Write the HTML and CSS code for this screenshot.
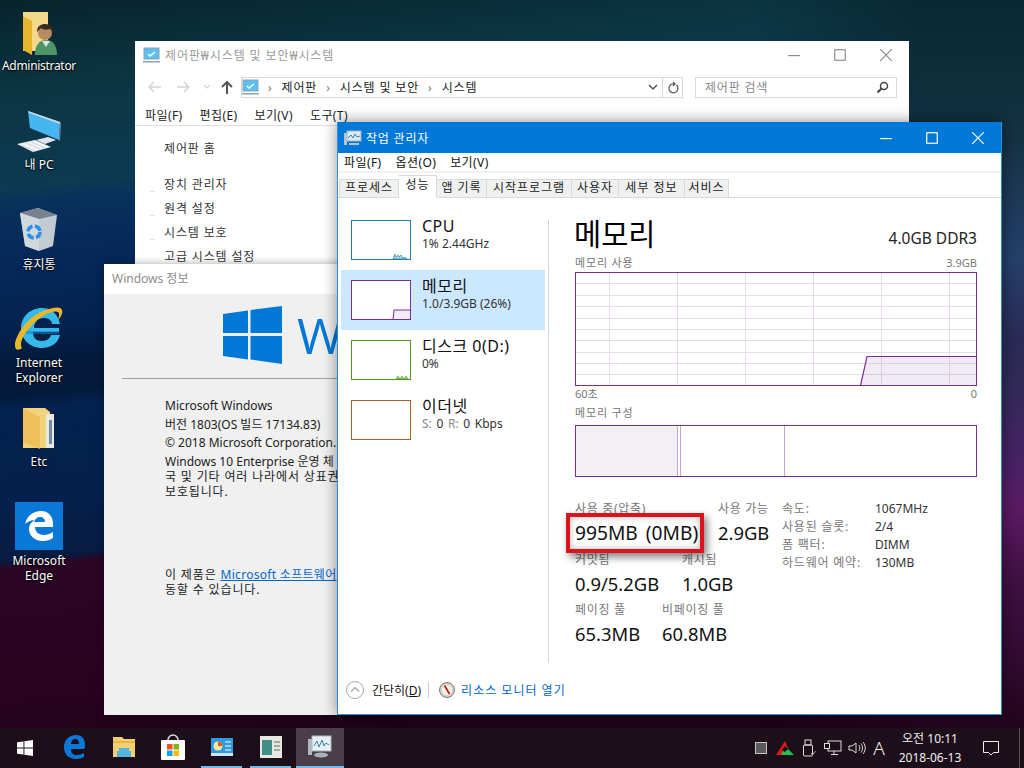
FILE: index.html
```html
<!DOCTYPE html>
<html lang="ko">
<head>
<meta charset="utf-8">
<title>작업 관리자</title>
<link rel="stylesheet" href="styles.css">
</head>
<body>
<div class="desktop">

  <div class="dicon di-admin">
    <svg width="52" height="46" viewBox="0 0 52 46"><path d="M10 1h25v39H10z" fill="#f3d98a"/><path d="M10 5l9 5v34l-9-5z" fill="#e8b62e"/><path d="M22 44c0-11 5-15 11-15s11 4 11 15z" fill="#4d9468"/><path d="M29 30l4 6 4-6z" fill="#d9e6dc"/><circle cx="32" cy="22" r="7" fill="#b98a60"/><path d="M24 21c0-6 4-8 8-8 5 0 8 3 8 8l-3-3c-3 1-7 1-9-1z" fill="#3a2a20"/></svg>
    <span>Administrator</span>
  </div>
  <div class="dicon di-pc">
    <svg width="52" height="46" viewBox="0 0 52 46"><path d="M15 2l32 11-1 18-29-12z" fill="#45b6f2"/><path d="M15 2l32 11v2L16 4z" fill="#c8d6e0"/><path d="M47 13l1 1-1 18-1-1z" fill="#7d8a96"/><path d="M23 31l12-3 8 3-11 4z" fill="#dfe4ea"/><path d="M4 35l18-4 16 7-18 5z" fill="#f2f3f5"/><path d="M8 36l14 6M13 34l14 6M18 33l14 6" stroke="#b8bec4" stroke-width=".6"/></svg>
    <span>내 PC</span>
  </div>
  <div class="dicon di-bin">
    <svg width="52" height="46" viewBox="0 0 52 46"><path d="M7 6l18-5 19 7-4 31-14 5-14-5z" fill="#c2cad2"/><path d="M7 6l18-5 19 7-18 4z" fill="#77838e"/><path d="M26 12v32l-14-5-5-33z" fill="#d8dee3" opacity=".7"/><circle cx="21" cy="25" r="6" fill="none" stroke="#2a8fe6" stroke-width="3.500" stroke-dasharray="7 2.500"/></svg>
    <span>휴지통</span>
  </div>
  <div class="dicon di-ie">
    <svg width="52" height="48" viewBox="0 0 52 48"><path d="M46 24H21c0-6 4-10 10-10 5 0 8 3 8 6h8C45 10 38 4 29 4 17 4 8 13 8 24s9 20 21 20c9 0 16-5 18-13h-9c-1 3-4 6-9 6-6 0-9-3-9-9h26z" fill="#35b9ea"/><path d="M13 27h33v3H13z" fill="#0a7fc4" opacity=".55"/><path d="M3 45C-2 38 12 14 30 7c10-4 18-5 19-1 1 3-1 7-4 10 1-3 2-7 0-8-3-2-13 1-23 10C13 26 5 39 9 44c-2 2-5 2-6 1z" fill="#e8b82c"/></svg>
    <span>Internet<br>Explorer</span>
  </div>
  <div class="dicon di-etc">
    <svg width="52" height="46" viewBox="0 0 52 46"><path d="M10 2h22l5 4v36H10z" fill="#f2d27c"/><path d="M33 8h8v34h-8z" fill="#e9e9e2"/><path d="M10 2l17 9v32L10 36z" fill="#eec05a"/><path d="M36 14h3v24h-3z" fill="#6f8fa0"/></svg>
    <span>Etc</span>
  </div>
  <div class="dicon di-edge">
    <div class="edge-tile"><svg width="30" height="31" viewBox="0 0 30 31"><path d="M1 13C3 5 9 0 17 0c8 0 12 6 12 13v3H11c0 5 4 8 9 8 3 0 6-1 9-3v6c-3 2-6 3-10 3C10 30 5 24 5 18c0-4 2-7 6-9-4 0-8 2-10 4zM21 11c0-3-2-5-5-5s-5 2-6 5z" fill="#fff"/></svg></div>
    <span>Microsoft<br>Edge</span>
  </div>

  <section class="win explorer">
    <header class="ex-title">
      <svg class="pc-mini" width="17" height="16" viewBox="0 0 17 16"><rect x="1" y="1" width="15" height="11" fill="#5cc0f2" stroke="#8ea2b0"/><path d="M5 7l2 2 5-4" stroke="#fff" fill="none" stroke-width="1.500"/><rect y="14" width="17" height="1.500" fill="#8ea2b0"/></svg>
      <span class="ex-title-text">제어판₩시스템 및 보안₩시스템</span>
      <div class="caption grey">
        <svg width="46" height="14" viewBox="0 0 12 12"><path d="M1 6.500h10" stroke="currentColor"/></svg>
        <svg width="46" height="14" viewBox="0 0 12 12"><rect x="1.500" y="1.500" width="9" height="9" fill="none" stroke="currentColor"/></svg>
        <svg width="46" height="14" viewBox="0 0 12 12"><path d="M1 1l10 10M11 1L1 11" stroke="currentColor" fill="none"/></svg>
      </div>
    </header>
    <div class="ex-nav">
      <span class="nv"><svg width="13" height="12" viewBox="0 0 13 12"><path d="M6 1L1 6l5 5M1 6h12" fill="none" stroke="#d4d4d4" stroke-width="1.500"/></svg></span>
      <span class="nv"><svg width="13" height="12" viewBox="0 0 13 12"><path d="M7 1l5 5-5 5M12 6H0" fill="none" stroke="#d4d4d4" stroke-width="1.500"/></svg></span>
      <span class="nv small"><svg width="8" height="6" viewBox="0 0 8 6"><path d="M1 1l3 3 3-3" fill="none" stroke="#d4d4d4" stroke-width="1.200"/></svg></span>
      <span class="nv up"><svg width="12" height="13" viewBox="0 0 12 13"><path d="M1 6l5-5 5 5M6 1v12" fill="none" stroke="#555" stroke-width="2"/></svg></span>
      <div class="addr">
        <svg class="pc-mini" width="17" height="16" viewBox="0 0 17 16"><rect x="1" y="1" width="15" height="11" fill="#5cc0f2" stroke="#8ea2b0"/><path d="M5 7l2 2 5-4" stroke="#fff" fill="none" stroke-width="1.500"/><rect y="14" width="17" height="1.500" fill="#8ea2b0"/></svg>
        <span class="crumb-sep">›</span><span>제어판</span><span class="crumb-sep">›</span><span>시스템 및 보안</span><span class="crumb-sep">›</span><span>시스템</span>
        <span class="addr-end">
          <svg width="10" height="8" viewBox="0 0 10 8"><path d="M1 2l4 4 4-4" fill="none" stroke="#555" stroke-width="1.500"/></svg>
          <svg class="refresh" width="12" height="13" viewBox="0 0 12 13"><path d="M9.500 4A4.500 4.500 0 1 1 5 3H8M6 1l2 2-2 2" fill="none" stroke="#555" stroke-width="1.200"/></svg>
        </span>
      </div>
      <div class="search"><span>제어판 검색</span><svg width="13" height="13" viewBox="0 0 13 13"><circle cx="8" cy="5" r="3.500" fill="none" stroke="#444" stroke-width="1.500"/><path d="M5.500 7.500L1.500 11.500" stroke="#444" stroke-width="2"/></svg></div>
    </div>
    <nav class="ex-menu"><span>파일(F)</span><span>편집(E)</span><span>보기(V)</span><span>도구(T)</span></nav>
    <ul class="ex-side">
      <li class="home">제어판 홈</li>
      <li class="mk">장치 관리자</li>
      <li class="mk">원격 설정</li>
      <li class="mk">시스템 보호</li>
      <li>고급 시스템 설정</li>
    </ul>
  </section>

  <section class="win about">
    <header class="ab-title">Windows 정보</header>
    <div class="ab-brand">
      <svg width="59" height="58" viewBox="0 0 59 58"><path d="M0 8l25-3.500V27H0zM27.500 4L59 0v27H27.500zM0 30h25v23.500L0 50zM27.500 30H59v28l-31.500-4.500z" fill="#0078d7"/></svg>
      <span class="ab-w">W</span>
    </div>
    <hr class="ab-rule">
    <div class="ab-text">
      <p>Microsoft Windows</p>
      <p>버전 1803(OS 빌드 17134.83)</p>
      <p>© 2018 Microsoft Corporation.</p>
      <p class="ab-para">Windows 10 Enterprise 운영 체<br><span class="ko">국 및 기타 여러 나라에서 상표권</span><br><span class="ko">보호됩니다.</span></p>
      <p class="ab-lic"><span class="ko">이 제품은 </span><a>Microsoft 소프트웨어</a><br><span class="ko">동할 수 있습니다.</span></p>
    </div>
  </section>

  <section class="win tm">
    <header class="tm-title">
      <svg width="18" height="16" viewBox="0 0 18 16"><rect x="3" y="1" width="14" height="10" fill="#dcebf5" stroke="#9fb2c0"/><path d="M4 8l3-3 2 3 2-4 2 3 3-1" fill="none" stroke="#3a7fb0"/><rect x="0" y="3" width="3" height="12" fill="#b8c4cc"/><rect x="5" y="13" width="10" height="2" fill="#b8c4cc"/></svg>
      <span>작업 관리자</span>
      <div class="caption white">
        <svg width="46" height="14" viewBox="0 0 12 12"><path d="M1 6.500h10" stroke="currentColor"/></svg>
        <svg width="46" height="14" viewBox="0 0 12 12"><rect x="1.500" y="1.500" width="9" height="9" fill="none" stroke="currentColor"/></svg>
        <svg width="46" height="14" viewBox="0 0 12 12"><path d="M1 1l10 10M11 1L1 11" stroke="currentColor" fill="none"/></svg>
      </div>
    </header>
    <nav class="tm-menu"><span>파일(F)</span><span>옵션(O)</span><span>보기(V)</span></nav>
    <div class="tabs">
      <span class="tab t1">프로세스</span><span class="tab t2 on">성능</span><span class="tab t3">앱 기록</span><span class="tab t4">시작프로그램</span><span class="tab t5">사용자</span><span class="tab t6">세부 정보</span><span class="tab t7">서비스</span>
    </div>
    <div class="tm-body">
      <aside class="side">
        <div class="item">
          <svg class="thumb" width="60" height="40" viewBox="0 0 60 40"><path d="M42 39l2-5 1 3 2-2 1 2 2-2 2 3 2-1 2 2z" fill="#a9d0e4" stroke="#1f7aa6" stroke-width=".6"/><rect x=".5" y=".5" width="59" height="39" fill="none" stroke="#1f7aa6"/></svg>
          <div class="meta"><div class="m-name">CPU</div><div class="m-val">1% 2.44GHz</div></div>
        </div>
        <div class="item sel">
          <svg class="thumb" width="60" height="40" viewBox="0 0 60 40"><rect width="60" height="40" fill="#fff"/><path d="M42 40l1-10h17v10z" fill="#f1edf3" stroke="#7a2d98"/><rect x=".5" y=".5" width="59" height="39" fill="none" stroke="#7a2d98"/></svg>
          <div class="meta"><div class="m-name">메모리</div><div class="m-val">1.0/3.9GB (26%)</div></div>
        </div>
        <div class="item">
          <svg class="thumb" width="60" height="40" viewBox="0 0 60 40"><path d="M45 39l2-3 2 3 2-3 2 3 2-3 2 3z" fill="#a6cf80" stroke="#4f9a1e" stroke-width=".6"/><rect x=".5" y=".5" width="59" height="39" fill="none" stroke="#4f9a1e"/></svg>
          <div class="meta"><div class="m-name">디스크 0(D:)</div><div class="m-val">0%</div></div>
        </div>
        <div class="item">
          <svg class="thumb" width="60" height="40" viewBox="0 0 60 40"><rect x=".5" y=".5" width="59" height="39" fill="none" stroke="#a7622a"/></svg>
          <div class="meta"><div class="m-name">이더넷</div><div class="m-val net"><i>S:</i> 0 <i>R:</i> 0 Kbps</div></div>
        </div>
      </aside>
      <main class="panel">
        <div class="p-head"><h1>메모리</h1><span class="p-spec">4.0GB DDR3</span></div>
        <div class="cap-row"><span class="ko">메모리 사용</span><span>3.9GB</span></div>
        <svg class="graph" width="402" height="114" viewBox="0 0 402 114">
          <g stroke="#e6dcea" fill="none">
            <path d="M34.500 0v114M102.500 0v114M170.500 0v114M238.500 0v114M306.500 0v114M374.500 0v114"/>
            <path d="M0 11.500h402M0 23.500h402M0 34.500h402M0 46.500h402M0 57.500h402M0 68.500h402M0 80.500h402M0 91.500h402M0 102.500h402"/>
          </g>
          <path d="M285.500 113.500L292 84.500H401.500V113.500z" fill="#8a5a9a" fill-opacity=".12" stroke="none"/>
          <path d="M285.500 113.500L292 84.500H401.500" fill="none" stroke="#7a2d98" stroke-width="1.200"/>
          <rect x=".5" y=".5" width="401" height="113" fill="none" stroke="#7a2d98"/>
        </svg>
        <div class="cap-row axis"><span>60초</span><span>0</span></div>
        <div class="cap-row comp-cap"><span class="ko">메모리 구성</span></div>
        <svg class="graph" width="402" height="52" viewBox="0 0 402 52">
          <rect x="0" y="0" width="103" height="52" fill="#f3f0f5"/>
          <path d="M102.500 0v52M105.500 0v52M209.500 0v52" stroke="#c3a4d2" fill="none"/>
          <rect x=".5" y=".5" width="401" height="51" fill="none" stroke="#7a2d98"/>
        </svg>
        <div class="stats">
          <div class="stats-left">
            <div class="srow r1">
              <div class="st w143"><label>사용 중(압축)</label><b>995MB (0MB)</b></div>
              <div class="st"><label>사용 가능</label><b>2.9GB</b></div>
            </div>
            <div class="srow r2">
              <div class="st w107"><label>커밋됨</label><b>0.9/5.2GB</b></div>
              <div class="st"><label>캐시됨</label><b>1.0GB</b></div>
            </div>
            <div class="srow r3">
              <div class="st w87"><label>페이징 풀</label><b>65.3MB</b></div>
              <div class="st"><label>비페이징 풀</label><b>60.8MB</b></div>
            </div>
          </div>
          <dl class="spec">
            <dt>속도:</dt><dd>1067MHz</dd>
            <dt>사용된 슬롯:</dt><dd>2/4</dd>
            <dt>폼 팩터:</dt><dd>DIMM</dd>
            <dt>하드웨어 예약:</dt><dd>130MB</dd>
          </dl>
        </div>
        <div class="red-box"></div>
      </main>
    </div>
    <footer class="tm-foot">
      <svg width="18" height="18" viewBox="0 0 18 18"><circle cx="9" cy="9" r="8.500" fill="#fff" stroke="#a8a8a8"/><path d="M5 10.500L9 6.500l4 4" fill="none" stroke="#a0a0a0" stroke-width="1.200"/></svg>
      <span class="less">간단히(<u>D</u>)</span>
      <span class="foot-sep"></span>
      <svg width="16" height="16" viewBox="0 0 16 16"><circle cx="8" cy="8" r="7.500" fill="#d8d2c8" stroke="#7a7a70"/><circle cx="8" cy="8" r="5" fill="#f4f0e6"/><path d="M5.500 3.500L10.500 12" stroke="#c01818" stroke-width="1.600"/></svg>
      <a class="rmon">리소스 모니터 열기</a>
    </footer>
  </section>

  <footer class="taskbar">
    <div class="tb-start"><svg width="16" height="16" viewBox="0 0 16 16"><path d="M0 2.300l6.500-.9v6.100H0zM7.400 1.300L16 0v7.500H7.400zM0 8.500h6.500v6.100L0 13.700zM7.400 8.500H16V16l-8.600-1.300z" fill="#fff"/></svg></div>
    <div class="tb-app"><svg width="21" height="24" viewBox="0 0 21 24"><path d="M20 14H7c0 4 2 6 6 6 3 0 5-1 7-2v4c-2 1-5 2-8 2C4 24 0 19 0 12 0 5 5 0 12 0c6 0 9 4 9 10 0 2 0 3-1 4zM15 9c0-3-1-5-4-5-2 0-4 2-4 5z" fill="#0a78d7"/></svg></div>
    <div class="tb-app"><svg width="22" height="20" viewBox="0 0 22 20"><path d="M0 0h9l2 2h11v18H0z" fill="#f2cf72"/><path d="M0 4h22v2H0z" fill="#e8b848"/><path d="M6 11h10v3h2v6H4v-6h2z" fill="#53b4e0"/></svg></div>
    <div class="tb-app"><svg width="24" height="26" viewBox="0 0 24 26"><path d="M7 6a5 5 0 0 1 10 0" fill="none" stroke="#ddd" stroke-width="1.500"/><rect y="6" width="24" height="20" rx="1" fill="#fff"/><rect x="6" y="10" width="5.500" height="5.500" fill="#f25022"/><rect x="12.500" y="10" width="5.500" height="5.500" fill="#7fba00"/><rect x="6" y="16.500" width="5.500" height="5.500" fill="#00a4ef"/><rect x="12.500" y="16.500" width="5.500" height="5.500" fill="#ffb900"/></svg></div>
    <div class="tb-app run"><svg width="22" height="18" viewBox="0 0 22 18"><rect width="22" height="18" fill="#2f9ae0"/><circle cx="7" cy="8" r="4.500" fill="#f5e6a0"/><path d="M7 8V3.500A4.500 4.500 0 0 1 11.500 8z" fill="#e05a20"/><path d="M14 4h6M14 8h6M14 12h6" stroke="#fff"/><rect x="0" y="15" width="22" height="3" fill="#cce3f2"/></svg></div>
    <div class="tb-app run"><svg width="22" height="22" viewBox="0 0 22 22"><rect width="22" height="22" fill="#e8e8e2"/><rect x="2" y="4" width="10" height="15" fill="#3f8f88"/><path d="M14 6h6M14 10h6M14 14h6" stroke="#666"/></svg></div>
    <div class="tb-app run active"><svg width="24" height="24" viewBox="0 0 24 24"><rect x="4" y="1" width="19" height="15" fill="#e8f0f4" stroke="#a8b6c0"/><path d="M6 11l3-5 2 6 3-7 2 6 2-3 3 2" fill="none" stroke="#3a7fb0"/><rect y="4" width="4" height="16" fill="#b0b8be"/><ellipse cx="13" cy="20" rx="7" ry="2.500" fill="#aab2b8"/></svg></div>
    <div class="tray">
      <span class="ti"><svg width="12" height="12" viewBox="0 0 12 12"><rect x=".5" y=".5" width="11" height="11" fill="#5a5a5a" stroke="#c4c4c4"/></svg></span>
      <span class="ti"><svg width="18" height="14" viewBox="0 0 18 14"><path d="M9 0l3 7-6 7H0z" fill="#e01818"/><path d="M9 5l9 9H5z" fill="#20c050"/><path d="M9 5l-3 4 3 2 3-3z" fill="#111"/></svg></span>
      <span class="ti"><svg width="14" height="18" viewBox="0 0 14 18"><rect x="3" y="1" width="6" height="5" fill="none" stroke="#ddd"/><rect x="1.500" y="6" width="9" height="11" rx="1" fill="none" stroke="#ddd"/><path d="M9 14l1.500 2 3-4" fill="none" stroke="#aaa"/></svg></span>
      <span class="ti"><svg width="18" height="16" viewBox="0 0 18 16"><rect x="4" y="1" width="13" height="10" fill="none" stroke="#ddd"/><rect x=".5" y="3.500" width="5" height="5" fill="#1c0e18" stroke="#ddd"/><path d="M10 11v3M7 14.500h7" stroke="#ddd"/></svg></span>
      <span class="ti"><svg width="18" height="14" viewBox="0 0 18 14"><path d="M1 5h3l4-3v10L4 9H1z" fill="none" stroke="#ddd"/><path d="M11 4c1 2 1 4 0 6M13 2.500c2 3 2 6 0 9M15 1c3 4 3 8 0 12" fill="none" stroke="#ddd"/></svg></span>
      <span class="ti ime">A</span>
    </div>
    <div class="clock"><span>오전 10:11</span><span>2018-06-13</span></div>
    <div class="notif"><svg width="16" height="15" viewBox="0 0 16 15"><path d="M.5.500h15v11h-5L8 14l-2.500-2.500h-5z" fill="none" stroke="#eee"/></svg></div>
    <div class="show-desk"></div>
  </footer>
</div>
</body>
</html>
```
FILE: styles.css
```css
* { box-sizing: border-box; }
html, body { margin: 0; padding: 0; }
body { font-family: "Noto Sans", "Noto Sans CJK KR", sans-serif; font-size: 12px; color: #222; }
ul, p, dl, dd, h1 { margin: 0; padding: 0; }
.ko { letter-spacing: .85px; }
.desktop {
  position: relative; width: 1024px; height: 768px; overflow: hidden;
  background: linear-gradient(174deg, #08232e 0, #0c3644 100px, #0b3a52 190px, #08315c 205px, #06285a 260px, #04224f 330px, #031a3a 365px, #031a3a 395px, #04214f 410px, #05204c 500px, #071c42 558px, #2a0525 566px, #28031f 700px, #1e0316 768px);
}
.desktop::before {
  content: ""; position: absolute; right: 0; top: 0; width: 260px; height: 768px;
  background: linear-gradient(180deg, #0a2833 0, #12303f 120px, #25406a 260px, #2a2a55 338px, #332a58 392px, #4a2068 470px, #5a1a60 509px, #3d0f40 587px, #300a30 665px, #26051f 715px, #1e0316 768px);
  -webkit-mask-image: linear-gradient(90deg, transparent, #000 60%);
  mask-image: linear-gradient(90deg, transparent, #000 60%);
}

/* desktop icons */
.dicon { position: absolute; left: 0; width: 78px; display: flex; flex-direction: column; align-items: center; color: #fff; font-size: 12px; line-height: 15px; text-align: center; text-shadow: 0 1px 2px #000, 0 0 2px #000; }
.di-admin { top: 11px; letter-spacing: -.3px; } .di-admin span { margin-top: 1px; }
.di-pc { top: 109px; } .di-pc span { margin-top: 2px; }
.di-bin { top: 207px; } .di-bin span { margin-top: 4px; }
.di-ie { top: 304px; } .di-ie span { margin-top: 3px; }
.di-etc { top: 406px; } .di-etc span { margin-top: 2px; }
.di-edge { top: 502px; } .di-edge span { margin-top: 3px; }
.edge-tile { width: 48px; height: 48px; background: #0a78d7; display: flex; align-items: center; justify-content: center; }

/* windows */
.win { position: absolute; overflow: hidden; }
.caption { display: flex; margin-left: auto; }
.caption.grey { color: #8a8a8a; }
.caption.white { color: #fff; margin-right: 1px; }
.pc-mini { flex: none; }

/* explorer */
.explorer { left: 135px; top: 41px; width: 774px; height: 240px; background: #fff; color: #333; }
.ex-title { height: 30px; display: flex; align-items: center; padding: 0 0 2px 8px; gap: 5px; }
.ex-title-text { color: #9a9a9a; font-size: 12px; letter-spacing: .9px; }
.ex-nav { height: 32px; display: flex; align-items: center; padding: 0 12px 0 5px; }
.nv { width: 29px; display: flex; justify-content: center; align-items: center; }
.nv.small { width: 18px; }
.nv.up { width: 22px; }
.addr { margin-left: 3px; flex: none; width: 442px; height: 21px; border: 1px solid #d9d9d9; display: flex; align-items: center; gap: 9px; padding: 0; color: #222; font-size: 12px; letter-spacing: .85px; }
.crumb-sep { color: #777; font-size: 12px; }
.addr-end { margin-left: auto; display: flex; align-items: center; height: 19px; gap: 4px; padding-right: 3px; }
.refresh { border-left: 1px solid #d9d9d9; box-sizing: content-box; padding: 3px 0 3px 4px; }
.search { margin-left: 12px; flex: none; width: 202px; height: 21px; border: 1px solid #d9d9d9; display: flex; align-items: center; justify-content: space-between; padding: 0 7px 0 9px; color: #888; font-size: 12px; letter-spacing: .8px; }
.ex-menu { height: 21px; display: flex; gap: 17px; align-items: center; padding: 0 0 0 10px; border-bottom: 1px solid #e0e0e0; font-size: 12px; color: #222; margin-top: 2px; letter-spacing: .4px; }
.ex-side { list-style: none; padding: 11px 0 0 29px; color: #333; font-size: 12px; letter-spacing: .85px; }
.ex-side li { height: 24px; line-height: 24px; position: relative; }
.ex-side .home { height: 36px; }
.ex-side .mk::before { content: ""; position: absolute; left: -14px; top: 18px; width: 5px; height: 1px; background: #e2e2e2; }

/* about */
.about { left: 104px; top: 264px; width: 300px; height: 451px; background: #f0f0f0; box-shadow: 0 0 8px rgba(0,0,0,.35); color: #222; }
.ab-title { height: 30px; background: #fff; color: #8c8c8c; padding: 6px 8px; font-size: 12px; line-height: 17px; }
.ab-brand { display: flex; align-items: center; padding: 12px 0 0 119px; gap: 15px; height: 70px; }
.ab-w { color: #0078d7; font-size: 50px; font-weight: 400; line-height: 58px; font-family: "Open Sans", sans-serif; }
.ab-rule { margin: 14px 0 0 18px; border: 0; border-top: 1px solid #a0a0a0; height: 0; }
.ab-text { padding: 18px 0 0 61px; font-size: 12px; line-height: 18.500px; white-space: nowrap; }
.ab-para { line-height: 15px; margin-top: 1px; }
.ab-lic { margin-top: 68px; line-height: 15px; }
.ab-lic a { color: #0066cc; text-decoration: underline; letter-spacing: .3px; }

/* task manager */
.tm { left: 337px; top: 122px; width: 665px; height: 593px; background: #fff; border: 1px solid #2f8fd4; border-top: 0; box-shadow: 0 0 14px rgba(0,0,0,.45); display: flex; flex-direction: column; }
.tm-title { height: 31px; flex: none; background: #0078d7; color: #fff; display: flex; align-items: center; padding: 0 0 0 7px; gap: 4px; font-size: 12px; margin: 0 -1px; letter-spacing: .8px; }
.tm-menu { height: 20px; flex: none; display: flex; align-items: center; gap: 14px; padding: 0 0 0 6px; color: #111; font-size: 12px; letter-spacing: .4px; border-bottom: 2px solid #f2f2f2; }
.tabs { height: 25px; flex: none; display: flex; align-items: flex-end; padding-left: 1px; border-bottom: 1px solid #d9d9d9; background: #fff; position: relative; }
.tab { height: 19px; margin-bottom: -1px; background: #f0f0f0; border: 1px solid #d9d9d9; border-left: 0; font-size: 12px; line-height: 16px; text-align: center; color: #222; letter-spacing: 1px; }
.t1 { width: 60px; border-left: 1px solid #d9d9d9; }
.t2 { width: 38px; } .t3 { width: 50px; } .t4 { width: 85px; } .t5 { width: 47px; } .t6 { width: 66px; } .t7 { width: 44px; }
.tab.on { background: #fff; height: 23px; border-bottom-color: #fff; line-height: 18px; }
.tm-body { flex: 1; display: flex; min-height: 0; }
.side { width: 211px; flex: none; margin-top: 22px; padding-top: 0; height: 443px; border-right: 1px solid #d6d6d6; }
.item { width: 204px; height: 60px; margin-left: 3px; display: flex; padding: 0 0 0 10px; gap: 11px; align-items: flex-start; }
.item .thumb { margin-top: 10px; flex: none; }
.item:first-child { margin-top: -10px; }
.item.sel { background: #cce8ff; }
.meta { padding-top: 4px; }
.m-name { font-size: 16px; line-height: 24px; color: #111; letter-spacing: .5px; }
.m-val { font-size: 12px; line-height: 14px; color: #333; margin-top: -1px; }
.m-val.net { word-spacing: 1.500px; }
.m-val i { font-style: normal; color: #888; }
.panel { flex: 1; padding: 18px 0 0 26px; position: relative; width: 402px; }
.p-head { width: 402px; display: flex; justify-content: space-between; align-items: flex-end; height: 36px; }
h1 { font-size: 29.500px; font-weight: 400; line-height: 36px; color: #000; margin-left: -1px; }
.p-spec { font-size: 15.500px; line-height: 22px; color: #222; margin-bottom: 3px; }
.cap-row { width: 402px; display: flex; justify-content: space-between; font-size: 11px; line-height: 14px; color: #777; margin-top: 4px; height: 16px; }
.graph { display: block; }
.axis { margin-top: 1px; }
.comp-cap { margin-top: 3px; height: 19px; }
.stats { display: flex; margin-top: 22px; width: 402px; position: relative; }
.stats-left { width: 207px; flex: none; }
.srow { display: flex; height: 51px; }
.r2 { height: 50px; }
.st label { display: block; font-size: 12px; line-height: 20px; color: #777; letter-spacing: .7px; white-space: nowrap; }
.st b { display: block; font-size: 18.400px; font-weight: 400; line-height: 27px; color: #111; white-space: nowrap; word-spacing: 4px; }
.w143 b { font-size: 19.200px; word-spacing: 3px; }
.w143 { width: 143px; } .w107 { width: 107px; } .w87 { width: 87px; }
.spec { display: grid; grid-template-columns: 93px auto; grid-auto-rows: 18px; font-size: 12px; line-height: 16px; align-content: start; padding-top: 2px; }
.spec dt { color: #777; white-space: nowrap; letter-spacing: .8px; }
.spec dd { color: #333; }
.tm-foot { height: 48px; flex: none; display: flex; align-items: center; padding: 0 0 0 8px; font-size: 12px; margin-top: auto; }
.less { margin-left: 8px; color: #111; }
.foot-sep { width: 1px; height: 16px; background: #ccc; margin: 0 10px 0 7px; }
.rmon { margin-left: 6px; color: #0066cc; letter-spacing: 1px; }
.red-box { position: absolute; left: 17px; top: 315px; width: 138px; height: 40px; border: 4px solid #d9141c; box-shadow: 3px 4px 8px rgba(0,0,0,.5), inset 0 0 6px rgba(0,0,0,.3); }

/* taskbar */
.taskbar { position: absolute; left: 0; right: 0; bottom: 0; height: 40px; background: #1d0f1a; display: flex; align-items: stretch; color: #eee; }
.tb-start { width: 50px; display: flex; align-items: center; justify-content: center; }
.tb-app { width: 49px; display: flex; align-items: center; justify-content: center; position: relative; padding-bottom: 2px; }
.tb-app.run::after { content: ""; position: absolute; left: 4px; right: 4px; bottom: 0; height: 2px; background: #76b9ed; }
.tb-app.active { background: #4a3f48; width: 48px; margin-left: 1px; }
.tb-app.active::after { left: 0; right: 0; }
.tray { margin-left: auto; display: flex; align-items: center; gap: 0; }
.ti { width: 24px; display: flex; justify-content: center; align-items: center; }
.ime { font-size: 19px; line-height: 20px; color: #eee; width: 20px; font-weight: 300; }
.clock { width: 82px; margin-right: 2px; display: flex; flex-direction: column; align-items: center; justify-content: center; font-size: 12px; line-height: 19px; color: #eee; }
.notif { width: 36px; margin-right: 10px; display: flex; align-items: center; justify-content: center; }
.show-desk { width: 5px; border-left: 1px solid #555; }
```
